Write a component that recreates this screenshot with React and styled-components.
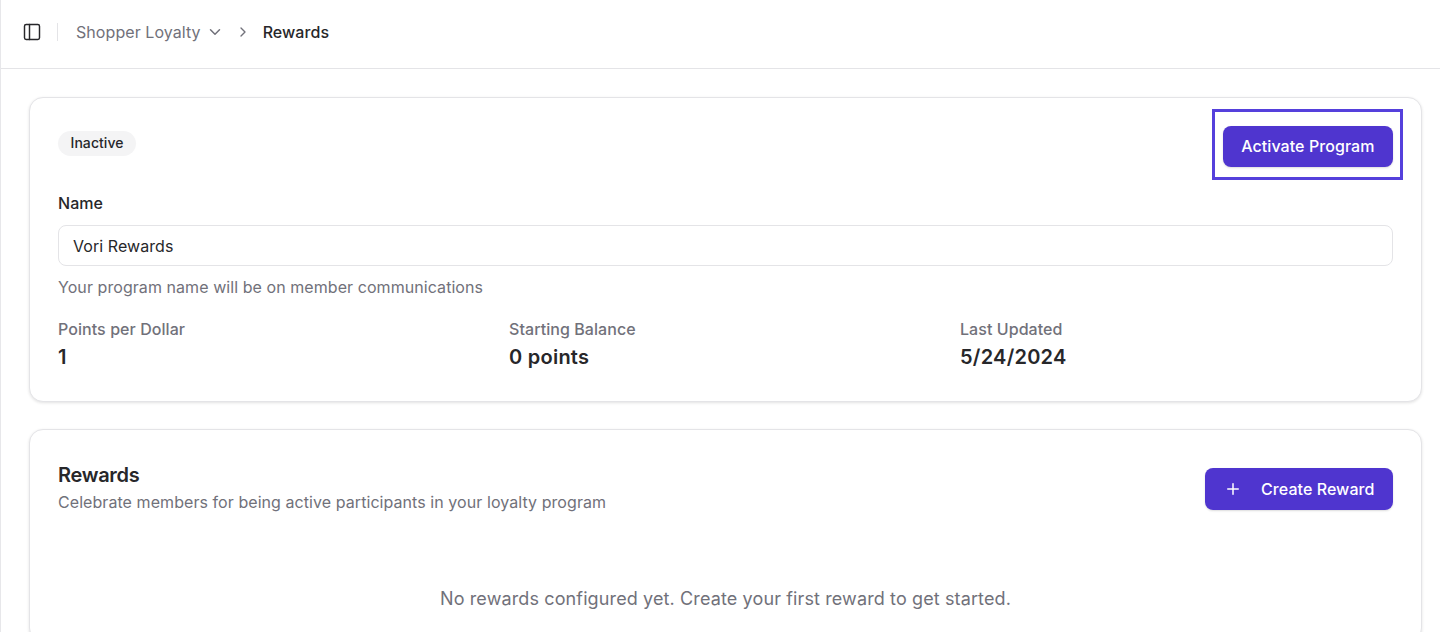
import styled, { createGlobalStyle } from "styled-components";
import { ChevronDown, ChevronRight, PanelLeft, Plus } from "lucide-react";

const GlobalStyle = createGlobalStyle`
  html, body {
    margin: 0;
    padding: 0;
    height: 100%;
    overflow: hidden;
    background: #fff;
    font-family: Inter, "Liberation Sans", sans-serif;
    color: #27272a;
    letter-spacing: 0.065px;
  }
  * {
    box-sizing: border-box;
  }
`;

const Page = styled.div`
  height: 632px;
  overflow: hidden;
  border-left: 1px solid #e7e7ea;
`;

const Header = styled.header`
  height: 69px;
  display: flex;
  align-items: center;
  padding: 0 0 5px 21px;
  border-bottom: 1px solid #e4e4e7;
`;

const Divider = styled.span`
  width: 1px;
  height: 18px;
  margin: 0 18px 0 15px;
  background: #e4e4e7;
`;

const Crumb = styled.span`
  font-size: 16px;
  line-height: 24px;
  color: ${(p) => (p.$current ? "#27272a" : "#71717a")};
  font-weight: ${(p) => (p.$current ? 500 : 400)};
`;

const CrumbIcon = styled.span`
  display: flex;
  color: ${(p) => p.$color || "#71717a"};
  margin: ${(p) => p.$margin};
`;

const Content = styled.main`
  padding: 28px 18px 0 28px;
  display: flex;
  flex-direction: column;
  gap: 27px;
`;

const Card = styled.section`
  padding: 28px;
  border: 1px solid #e4e4e7;
  border-radius: 14px;
  background: #fff;
  box-shadow: 0 1px 3px rgba(24, 24, 27, 0.12);
`;

const TopRow = styled.div`
  display: flex;
  justify-content: space-between;
  align-items: flex-start;
  height: 65px;
`;

const Badge = styled.span`
  margin-top: 5px;
  height: 25px;
  padding: 0 12.5px 2px;
  display: inline-flex;
  align-items: center;
  border-radius: 13px;
  background: #f4f4f5;
  font-size: 14px;
  font-weight: 500;
  color: #27272a;
`;

const Highlight = styled.div`
  position: relative;
`;

const HighlightFrame = styled.span`
  position: absolute;
  top: -17px;
  left: -11px;
  right: -10px;
  bottom: -13px;
  border: 3px solid #5540dc;
  pointer-events: none;
`;

const Button = styled.button`
  height: ${(p) => p.$height || "41px"};
  padding: ${(p) => p.$padding || "0 18.5px 1px"};
  margin-top: ${(p) => p.$offset || "0"};
  display: inline-flex;
  align-items: center;
  gap: ${(p) => p.$gap || "0"};
  border: 0;
  border-radius: 8px;
  background: #4f35cf;
  color: #fff;
  font-family: inherit;
  font-size: 16px;
  font-weight: 500;
  letter-spacing: inherit;
  box-shadow: 0 1px 2px rgba(24, 24, 27, 0.15);
`;

const Label = styled.label`
  display: block;
  font-size: 16px;
  line-height: 24px;
  font-weight: 500;
  color: #27272a;
  margin-bottom: 10px;
`;

const Input = styled.input`
  display: block;
  width: 100%;
  height: 41px;
  padding: 0 14px;
  border: 1px solid #e4e4e7;
  border-radius: 8px;
  background: #fff;
  font-family: inherit;
  font-size: 16px;
  letter-spacing: inherit;
  color: #27272a;
  outline: none;
`;

const Help = styled.p`
  margin: 9px 0 0;
  font-size: 16px;
  line-height: 24px;
  color: #71717a;
`;

const Stats = styled.div`
  display: grid;
  grid-template-columns: repeat(3, 1fr);
  margin-top: 18px;
  width: 1353px;
`;

const StatLabel = styled.div`
  font-size: 16px;
  line-height: 24px;
  font-weight: 500;
  color: #71717a;
`;

const StatValue = styled.div`
  font-size: 20px;
  line-height: 32px;
  font-weight: 600;
  letter-spacing: 0.25px;
  color: #27272a;
`;

const RewardsHead = styled.div`
  display: flex;
  justify-content: space-between;
  align-items: flex-start;
  margin-top: 2px;
`;

const Title = styled.h2`
  margin: 0;
  font-size: 20px;
  line-height: 30px;
  font-weight: 600;
  letter-spacing: -0.3px;
  color: #27272a;
`;

const Subtitle = styled.p`
  margin: 0;
  font-size: 16px;
  line-height: 24px;
  color: #71717a;
`;

const Empty = styled.p`
  margin: 71px 0 0;
  text-align: center;
  font-size: 18px;
  line-height: 28px;
  letter-spacing: 0.12px;
  color: #71717a;
`;

export default function App() {
  return (
    <>
      <GlobalStyle />
      <Page>
        <Header>
          <CrumbIcon $margin="0" $color="#27272a">
            <PanelLeft size={20} strokeWidth={1.75} />
          </CrumbIcon>
          <Divider />
          <Crumb>Shopper Loyalty</Crumb>
          <CrumbIcon $margin="0 0 0 5px">
            <ChevronDown size={18} />
          </CrumbIcon>
          <CrumbIcon $margin="0 12px 0 11px">
            <ChevronRight size={16} />
          </CrumbIcon>
          <Crumb $current>Rewards</Crumb>
        </Header>
        <Content>
          <Card>
            <TopRow>
              <Badge>Inactive</Badge>
              <Highlight>
                <HighlightFrame />
                <Button>Activate Program</Button>
              </Highlight>
            </TopRow>
            <Label>Name</Label>
            <Input readOnly value="Vori Rewards" />
            <Help>Your program name will be on member communications</Help>
            <Stats>
              <div>
                <StatLabel>Points per Dollar</StatLabel>
                <StatValue>1</StatValue>
              </div>
              <div>
                <StatLabel>Starting Balance</StatLabel>
                <StatValue>0 points</StatValue>
              </div>
              <div>
                <StatLabel>Last Updated</StatLabel>
                <StatValue>5/24/2024</StatValue>
              </div>
            </Stats>
          </Card>
          <Card>
            <RewardsHead>
              <div>
                <Title>Rewards</Title>
                <Subtitle>Celebrate members for being active participants in your loyalty program</Subtitle>
              </div>
              <Button $height="42px" $offset="8px" $gap="19px" $padding="0 18.5px 1px 19px">
                <Plus size={18} />
                Create Reward
              </Button>
            </RewardsHead>
            <Empty>No rewards configured yet. Create your first reward to get started.</Empty>
          </Card>
        </Content>
      </Page>
    </>
  );
}
